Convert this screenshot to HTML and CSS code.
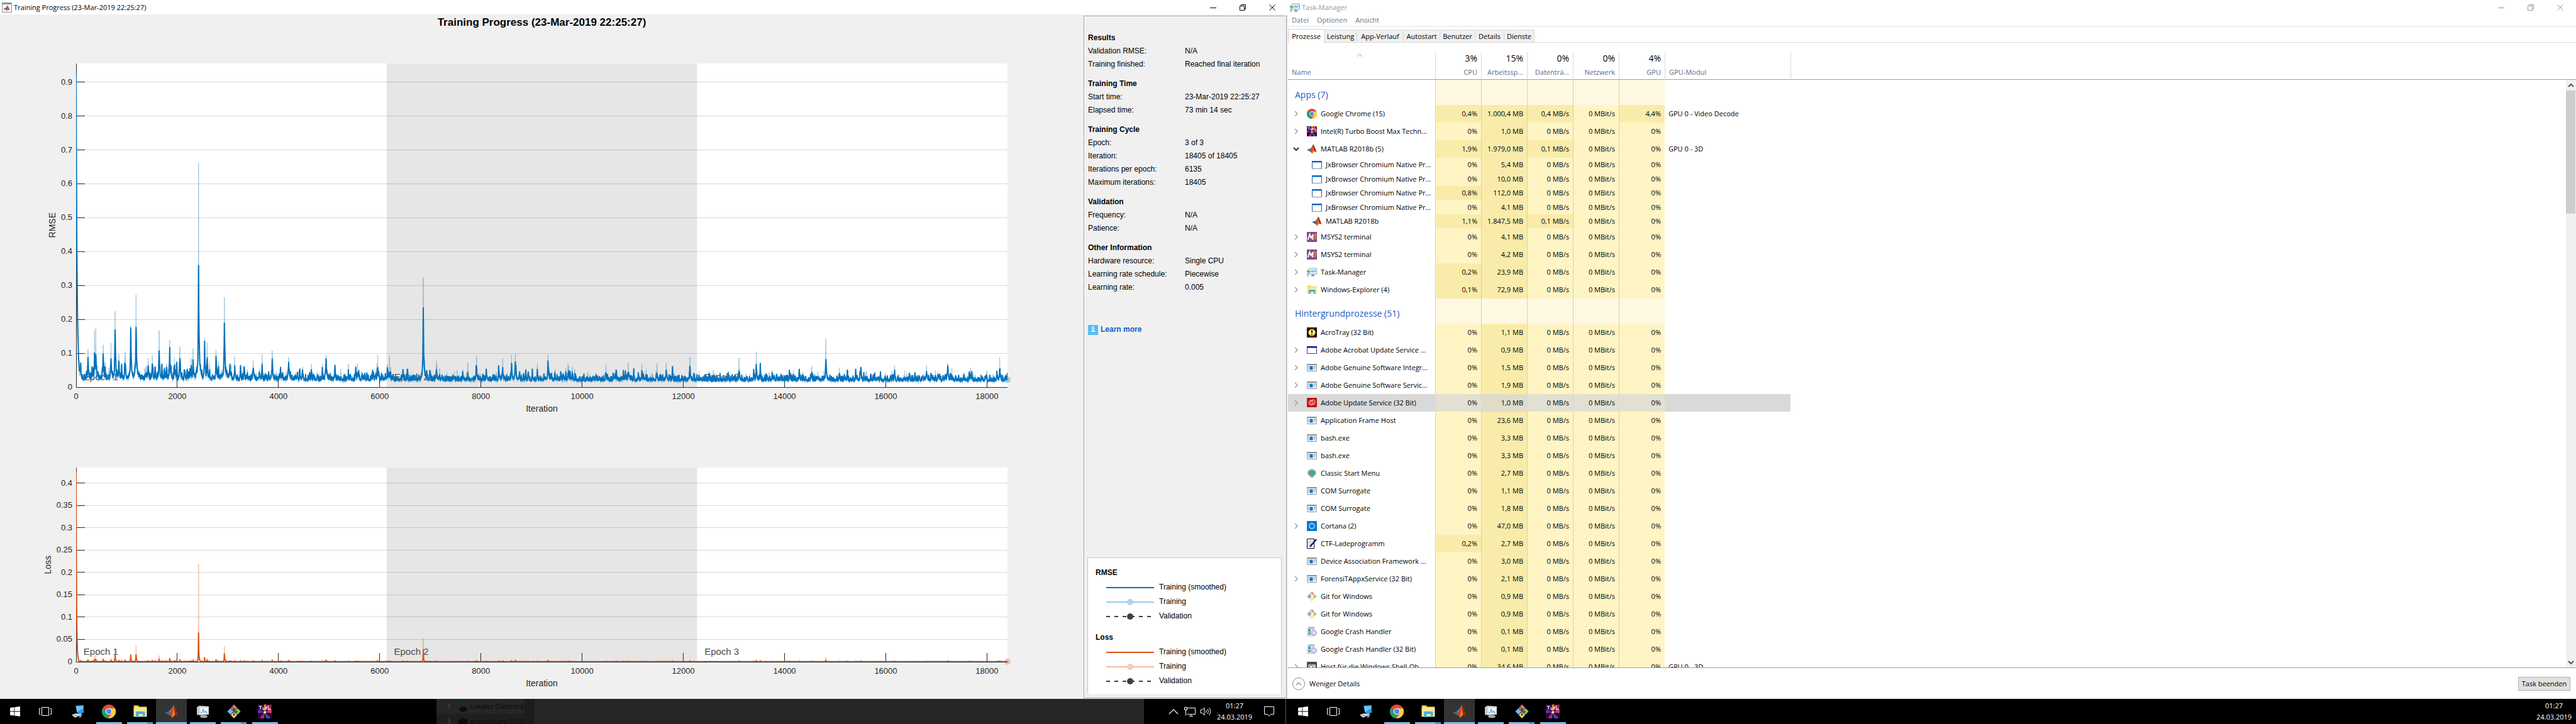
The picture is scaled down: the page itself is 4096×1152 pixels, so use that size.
FILE: index.html
```html
<!DOCTYPE html>
<html lang="de">
<head>
<meta charset="utf-8">
<title>Training Progress</title>
<link rel="stylesheet" href="styles.css">
</head>
<body>
<svg class="sprite" aria-hidden="true">
  <symbol id="i-matlab" viewBox="0 0 16 16"><path d="M0 9.5 5 7.2 7.6 9.4 4.6 12z" fill="#2d6f9e"/><path d="M5 7.2C7.5 6.8 8.6 2.6 10.4.6L7.6 9.4z" fill="#4ba0c8"/><path d="M10.4.6C8.4 3 7.6 8.4 4.6 12c2 0 2.600 2.600 3.800 3.200C10.400 13 10.800 11 12.600 12z" fill="#c8441b"/><path d="M10.400.6C9.800 4 10 9 8.400 15.200 10.600 14 11 11.400 12.600 11.600z" fill="#f28c28"/><path d="M10.400.6C12 2.600 13.600 8.800 16 13.600c-1.600-1.800-2.800-2-4.200-1C10.800 8 10.200 4 10.400.6z" fill="#a52a12"/></symbol>
  <symbol id="i-chrome" viewBox="0 0 16 16"><circle cx="8" cy="8" r="8" fill="#dd4b3e"/><path d="M1.100 4 6 9.500 8 12 7.400 16A8 8 0 0 1 1.100 4z" fill="#1da362"/><path d="M15.300 4.600H8.500L11.600 10 7.600 16A8 8 0 0 0 15.300 4.600z" fill="#ffcd42"/><circle cx="8" cy="8" r="3.800" fill="#f4f4f4"/><circle cx="8" cy="8" r="3" fill="#4a8af4"/></symbol>
  <symbol id="i-turbo" viewBox="0 0 16 16"><path d="M0 0h16v16H0z" fill="#2a0a3a"/><path d="M8 9 0 6v4z" fill="#6a2fb0"/><path d="M8 9 16 5v5z" fill="#e0305a"/><path d="M8 9 2 16h5z" fill="#c21e8a"/><path d="M8 9 10 16h5z" fill="#2f56c8"/><path d="M8 9 7 0h3z" fill="#f0852c"/><path d="M8 9 11 0h5v2z" fill="#a31545"/><circle cx="8" cy="9" r="1.500" fill="#ffe9b0"/><path d="M1 2h4M3 2v4M6 3v3h2V3M9.500 6V3H11M12 1v5h2V3.500" stroke="#fff" fill="none" stroke-width=".9"/></symbol>
  <symbol id="i-jx" viewBox="0 0 16 16"><path d="M.5 2.500h15v12H.5z" fill="#fff" stroke="#36599c"/><path d="M0 2h16v2.500H0z" fill="#0b63c4"/><path d="M0 14h16v1H0z" fill="#7f92b5"/></symbol>
  <symbol id="i-msys" viewBox="0 0 16 16"><path d="M0 0h16v16H0z" fill="#84498a"/><path d="M1.500 12.500 4.500 4 6.500 9.500 10 4 9 12.500" stroke="#fff" fill="none" stroke-width="2"/><path d="M10.500 5C12 3 15 4 14.500 6.500 14 8 12 8 12 8c3 .5 2.500 3.500-1.500 4" stroke="#f1803a" fill="none" stroke-width="1.800"/></symbol>
  <symbol id="i-task" viewBox="0 0 16 16"><path d="M.3 5h3v10h-3z" fill="#b8bdc2"/><path d="M.3 5h3v3h-3z" fill="#55b04a"/><path d="M3 1.500h13v10H3z" fill="#a5abb0"/><path d="M4 2.500h11v8H4z" fill="#d9f1fb"/><path d="M4 7.500h2L8 5l2 3 2.500-3L15 7.500" stroke="#1986bd" fill="none"/><path d="M8 11.500h3l1.500 3h-6z" fill="#8c9196"/></symbol>
  <symbol id="i-explorer" viewBox="0 0 16 16"><path d="M.5 1h5l1.500 1.500h8.500V14H.5z" fill="#ffd75e"/><path d="M.5 4h15v10H.5z" fill="#ffe795"/><path d="M3 8h10.500v6.500H11V11H5.800v3.500H3z" fill="#3fb2e5"/></symbol>
  <symbol id="i-acro" viewBox="0 0 16 16"><path d="M0 0h16v16H0z"/><path d="M1.500 1.500h13v13h-13z" fill="none" stroke="#d8201c" stroke-dasharray="2 1.500"/><circle cx="8" cy="8" r="5.500" fill="#fbf36a"/><path d="M8 4v5M8 10.500v2" stroke="#000" stroke-width="1.600"/></symbol>
  <symbol id="i-window" viewBox="0 0 16 16"><path d="M.5 2.500h15v11H.5z" fill="#fff" stroke="#3b3ba5"/><path d="M0 2h16v2.500H0z" fill="#0a0aa8"/></symbol>
  <symbol id="i-service" viewBox="0 0 16 16"><path d="M.8 2.500h14.400v11H.8z" fill="#f7f7f7" stroke="#8a9096"/><path d="M.5 2h15v2H.5z" fill="#8a9096"/><path d="M4.500 5.500h5v6h-5z" fill="#0a78d6"/><path d="M11 6h3M11 8h3M11 10h2M2 6h1.500M2 8h1.500M2 10h1.500" stroke="#8a9096"/></symbol>
  <symbol id="i-cc" viewBox="0 0 16 16"><rect width="16" height="15" rx="1" fill="#c9100f"/><circle cx="6.500" cy="8" r="3.300" fill="none" stroke="#fbb" stroke-width="1.200"/><circle cx="9.500" cy="7" r="3.600" fill="none" stroke="#fbb" stroke-width="1.200"/></symbol>
  <symbol id="i-shell" viewBox="0 0 16 16"><path d="M8 1c5 0 8 4 7 8-1 2-3 3-4 4v2H5v-2c-1-1-3-2-4-4C0 5 3 1 8 1z" fill="#e7b873"/><path d="M8 3c4 0 6 3 5.500 5.500C13 10.500 10 12 10 13H6c0-1-3-2.500-3.500-4.500C2 6 4 3 8 3z" fill="#32a9b8"/></symbol>
  <symbol id="i-cortana" viewBox="0 0 16 16"><path d="M0 0h16v16H0z" fill="#0a78d6"/><circle cx="8" cy="8" r="4" fill="none" stroke="#bfe3ff" stroke-width="1.400"/></symbol>
  <symbol id="i-ctf" viewBox="0 0 16 16"><path d="M.5.5h11v15H.5z" fill="#fff" stroke="#000"/><path d="M2 4h7M2 6.500h6M2 9h5M2 11.500h3" stroke="#555" stroke-dasharray="1 1"/><path d="M15 1 5 13" stroke="#14148c" stroke-width="2.600"/></symbol>
  <symbol id="i-git" viewBox="0 0 16 16"><path d="M8 0l3.600 3.800L8 7.600 4.400 3.800z" fill="#f07a72"/><path d="M4 4.200 7.600 8 4 11.800.3 8z" fill="#7eabf5"/><path d="M12 4.200 15.700 8 12 11.800 8.400 8z" fill="#86d157"/><path d="M8 8.400l3.600 3.800L8 16l-3.600-3.800z" fill="#ffe070"/><path d="M6 2.500 8 5v7M8 6l3 2.500" stroke="#444" stroke-width="1" fill="none"/><circle cx="8" cy="12" r="1.200" fill="#444"/><circle cx="11" cy="8.500" r="1.200" fill="#444"/><circle cx="8" cy="5.300" r="1.200" fill="#444"/></symbol>
  <symbol id="i-gitlight" viewBox="0 0 16 16"><path d="M8 0l3.600 3.800L8 7.600 4.400 3.800z" fill="#f58a84"/><path d="M4 4.200 7.600 8 4 11.800.3 8z" fill="#7eabf5"/><path d="M12 4.200 15.700 8 12 11.800 8.400 8z" fill="#98d870"/><path d="M8 8.400l3.600 3.800L8 16l-3.600-3.800z" fill="#ffe488"/><path d="M6 2.500 8 5v7M8 6l3 2.500" stroke="#fff" stroke-width="1.200" fill="none"/></symbol>
  <symbol id="i-setup" viewBox="0 0 16 16"><path d="M2 .5h10v3H2z" fill="#9db8d2"/><path d="M1 3h10v12H1z" fill="#d9e8f4" stroke="#9fb2c4" stroke-width=".6"/><path d="M2.500 4h3v4h-3z" fill="#2d7fd1"/><path d="M2.500 9h3v4h-3z" fill="#49a942"/><circle cx="11" cy="10" r="4.600" fill="#c9c9ec" stroke="#8e8ec2" stroke-width=".6"/><circle cx="11" cy="10" r="1.300" fill="#fff"/></symbol>
  <symbol id="i-host" viewBox="0 0 16 16"><path d="M0 0h16v16H0z" fill="#4a4a4a"/><path d="M2.500 4.500h11v9h-11z" fill="#fff"/><path d="M4 6h5v6H4zM10.500 6H12M10.500 8H12" fill="none" stroke="#4a4a4a"/></symbol>
  <symbol id="i-pc" viewBox="0 0 22 22"><path d="M7 2l13-1v12l-9 2z" fill="#2f9be8"/><path d="M8 3l11-1v4L9 12z" fill="#6cc4fa"/><path d="M9 15l7-1 2 3-8 2z" fill="#b9c2cb"/><path d="M1 16l8-2 5 3-8 4z" fill="#e3e7ea"/><path d="M3 17l6-1M5 19l6-2" stroke="#8a939b"/><path d="M14 18l3 1-4 2z" fill="#d7dce0"/></symbol>
  <symbol id="i-taskgray" viewBox="0 0 22 22"><path d="M2 4l4-2v15l-4-1z" fill="#c3c7c9"/><path d="M6 2l15 1v13L6 17z" fill="#d8dcde"/><path d="M8 5l11 .5v9L8 15z" fill="#eef6fb"/><path d="M8 13l3-1 1-5 2 6 2-3 1 3h2" stroke="#4a90c0" fill="none"/><ellipse cx="13" cy="19" rx="6" ry="2.500" fill="#a4a9ac"/></symbol>
  <symbol id="i-win" viewBox="0 0 16 16"><path d="M0 2.300 6.500 1.300v6.300H0zM7.300 1.200 16 0v7.600H7.300zM0 8.400h6.500v6.300L0 13.700zM7.300 8.400H16V16l-8.700-1.200z" fill="#fff"/></symbol>
  <symbol id="i-view" viewBox="0 0 20 16"><path d="M4.500 1.500h11v13h-11zM2.500 3.500h-2v9h2M17.500 3.500h2v9h-2" fill="none" stroke="#fff"/></symbol>
  <symbol id="i-min" viewBox="0 0 10 10"><path d="M0 5.500h10" stroke="currentColor"/></symbol>
  <symbol id="i-restore" viewBox="0 0 10 10"><path d="M.5 2.500h7v7h-7zM2.500 2.500v-2h7v7h-2" fill="none" stroke="currentColor"/></symbol>
  <symbol id="i-close" viewBox="0 0 10 10"><path d="M.5.5l9 9M9.500.5l-9 9" stroke="currentColor"/></symbol>
  <symbol id="i-right" viewBox="0 0 8 10"><path d="M2 1l4 4-4 4" fill="none" stroke="currentColor" stroke-width="1.500"/></symbol>
  <symbol id="i-down" viewBox="0 0 10 8"><path d="M1 2l4 4 4-4" fill="none" stroke="currentColor" stroke-width="2"/></symbol>
  <symbol id="i-up" viewBox="0 0 10 8"><path d="M1 6l4-4 4 4" fill="none" stroke="currentColor" stroke-width="2"/></symbol>
  <symbol id="i-upthin" viewBox="0 0 16 9"><path d="M1 8l7-7 7 7" fill="none" stroke="currentColor" stroke-width="1.200"/></symbol>
</svg>

<div class="screen">
  <main class="window">
    <header class="titlebar">
      <svg class="fig-icon" viewBox="0 0 16 16"><path d="M.5.5h15v15H.5z" fill="#f4f6f8" stroke="#8795a5"/><path d="M1 1h14v2H1z" fill="#6f9cc9"/><use href="#i-matlab" x="2" y="4" width="11" height="10"/></svg>
      <span>Training Progress (23-Mar-2019 22:25:27)</span>
      <div class="controls">
        <button aria-label="Minimieren"><svg><use href="#i-min"/></svg></button>
        <button aria-label="Verkleinern"><svg><use href="#i-restore"/></svg></button>
        <button aria-label="Schließen"><svg><use href="#i-close"/></svg></button>
      </div>
    </header>
    <div class="figure">
      <section class="plots">
        <h1>Training Progress (23-Mar-2019 22:25:27)</h1>
        <div class="y-axis rmse-axis" id="y1"><span class="y-name">RMSE</span></div>
        <svg class="plot" id="plot1"></svg>
        <div class="x-axis" id="x1"><span class="x-name">Iteration</span></div>
        <div class="y-axis loss-axis" id="y2"><span class="y-name">Loss</span></div>
        <svg class="plot" id="plot2"></svg>
        <div class="x-axis" id="x2"><span class="x-name">Iteration</span></div>
      </section>
      <aside class="panel">
        <div class="info">
          <h2>Results</h2>
          <dl><dt>Validation RMSE:</dt><dd>N/A</dd><dt>Training finished:</dt><dd>Reached final iteration</dd></dl>
          <h2>Training Time</h2>
          <dl><dt>Start time:</dt><dd>23-Mar-2019 22:25:27</dd><dt>Elapsed time:</dt><dd>73 min 14 sec</dd></dl>
          <h2>Training Cycle</h2>
          <dl><dt>Epoch:</dt><dd>3 of 3</dd><dt>Iteration:</dt><dd>18405 of 18405</dd><dt>Iterations per epoch:</dt><dd>6135</dd><dt>Maximum iterations:</dt><dd>18405</dd></dl>
          <h2>Validation</h2>
          <dl><dt>Frequency:</dt><dd>N/A</dd><dt>Patience:</dt><dd>N/A</dd></dl>
          <h2>Other Information</h2>
          <dl><dt>Hardware resource:</dt><dd>Single CPU</dd><dt>Learning rate schedule:</dt><dd>Piecewise</dd><dt>Learning rate:</dt><dd>0.005</dd></dl>
          <a class="learn" href="#"><span class="info-icon">i</span>Learn more</a>
        </div>
        <div class="legend">
          <h3>RMSE</h3>
          <p><svg><path d="M0 8h76" stroke="#0072bd" stroke-width="2"/></svg>Training (smoothed)</p>
          <p><svg><path d="M0 8h76" stroke="#99c7e5" stroke-width="2"/><circle cx="38" cy="8" r="5" fill="#b2d5eb"/></svg>Training</p>
          <p><svg><path d="M0 8h72" stroke="#404040" stroke-width="2" stroke-dasharray="6 7"/><circle cx="38" cy="8" r="5" fill="#404040"/></svg>Validation</p>
          <h3>Loss</h3>
          <p><svg><path d="M0 8h76" stroke="#d95319" stroke-width="2"/></svg>Training (smoothed)</p>
          <p><svg><path d="M0 8h76" stroke="#f0baa3" stroke-width="2"/><circle cx="38" cy="8" r="5" fill="#f4cbba"/></svg>Training</p>
          <p><svg><path d="M0 8h72" stroke="#404040" stroke-width="2" stroke-dasharray="6 7"/><circle cx="38" cy="8" r="5" fill="#404040"/></svg>Validation</p>
        </div>
      </aside>
    </div>
  </main>
  <nav class="taskbar">
    <div class="launch"></div>
    <div class="ghost">
      <div class="ghost-list">
        <div><svg class="g-chev"><use href="#i-right"/></svg><svg class="g-icon" viewBox="0 0 20 20"><path d="M1 1h5v5H1zM7 1h5v5H7zM1 7h5v5H1z" fill="#0a3142"/><path d="M5 13l8-3 6 3v4l-8 3-6-3z" fill="#0c0c0c"/></svg><span>Lokaler Datenträ</span></div>
        <div><svg class="g-chev"><use href="#i-right"/></svg><svg class="g-icon" viewBox="0 0 20 20"><path d="M3 7l8-3 8 3v6l-8 4-8-4z" fill="#0c0c0c"/></svg><span>groupshare (\\15</span></div>
      </div>
      <div class="ghost-bar"></div>
      <div class="ghost-rest"></div>
    </div>
    <div class="tray">
      <svg class="t-up"><use href="#i-upthin"/></svg>
      <svg class="t-net" viewBox="0 0 18 16"><path d="M4.500 2.500h13v10h-13M8 15.500h6M11 12.500v3M.5 1.500h4v4h-4zM2.500 5.500v9" fill="none" stroke="#fff"/></svg>
      <svg class="t-vol" viewBox="0 0 18 16"><path d="M1 5.500h2.500L7 2v12l-3.500-3.500H1zM9.500 6q1.500 2 0 4M12 4q3 4 0 8M14.500 2q4.500 6 0 12" fill="none" stroke="#fff"/></svg>
      <time><span>01:27</span><span>24.03.2019</span></time>
      <svg class="t-note" viewBox="0 0 16 16"><path d="M.5.5h15v12h-5l-2.500 3-2.500-3h-5z" fill="none" stroke="#fff"/></svg>
      <i class="peek"></i>
    </div>
  </nav>
</div>

<div class="screen">
  <main class="window tm">
    <header class="titlebar">
      <svg class="fig-icon"><use href="#i-task"/></svg>
      <span>Task-Manager</span>
      <div class="controls">
        <button aria-label="Minimieren"><svg><use href="#i-min"/></svg></button>
        <button aria-label="Verkleinern"><svg><use href="#i-restore"/></svg></button>
        <button aria-label="Schließen"><svg><use href="#i-close"/></svg></button>
      </div>
    </header>
    <nav class="menu"><button>Datei</button><button>Optionen</button><button>Ansicht</button></nav>
    <div class="tabs"><button class="on">Prozesse</button><button>Leistung</button><button>App-Verlauf</button><button>Autostart</button><button>Benutzer</button><button>Details</button><button>Dienste</button></div>
    <div class="list">
      <table>
        <colgroup><col class="c-name"><col class="c-num"><col class="c-num"><col class="c-num"><col class="c-num"><col class="c-num"><col class="c-mod"></colgroup>
        <thead><tr>
          <th class="left"><svg class="sort"><use href="#i-upthin"/></svg>Name</th>
          <th><b>3%</b>CPU</th><th><b>15%</b>Arbeitssp...</th><th><b>0%</b>Datenträ...</th><th><b>0%</b>Netzwerk</th><th><b>4%</b>GPU</th>
          <th class="left"><b></b>GPU-Modul</th><th class="end"></th>
        </tr></thead>
        <tbody id="rows"></tbody>
      </table>
      <div class="scroll"><button aria-label="Nach oben"><svg><use href="#i-up"/></svg></button><i class="thumb"></i><button class="last" aria-label="Nach unten"><svg><use href="#i-down"/></svg></button></div>
    </div>
    <footer class="foot">
      <button class="less"><svg viewBox="0 0 20 20"><circle cx="10" cy="10" r="9.500" fill="none" stroke="#8c8c8c"/><path d="M6 12l4-4 4 4" fill="none" stroke="#8c8c8c" stroke-width="1.300"/></svg>Weniger Details</button>
      <button class="end-task">Task beenden</button>
    </footer>
  </main>
  <nav class="taskbar">
    <div class="launch"></div>
    <div class="tray"><time><span>01:27</span><span>24.03.2019</span></time></div>
  </nav>
</div>
<script src="app.js"></script>
</body>
</html>
```

FILE: styles.css
```css
* { box-sizing: border-box; }
body { margin: 0; display: grid; grid-template-columns: 1fr 1fr; height: 100vh; overflow: hidden; font: 12px/16px "Liberation Sans", Arial, sans-serif; color: #000; }
h1, h2, h3, p, dl, dd { margin: 0; }
button { font: inherit; color: inherit; background: none; border: 0; padding: 0; }
.sprite { display: none; }
.screen { display: flex; flex-direction: column; min-width: 0; height: 100vh; }
.window { flex: 1; min-height: 0; display: flex; flex-direction: column; background: #fff; }

.titlebar { display: flex; align-items: center; height: 23px; padding: 0 2px 0 3px; gap: 3px; background: #fff; font: 11px/16px "Open Sans", "Noto Sans", sans-serif; }
.fig-icon { width: 16px; height: 16px; }
.controls { display: flex; margin-left: auto; }
.controls button { width: 47px; height: 23px; display: grid; place-items: center; }
.controls svg { width: 10px; height: 10px; }

.figure { flex: 1; min-height: 0; display: grid; grid-template-columns: 1fr 323px; padding-right: 2px; background: #f0f0f0; }
.plots { display: grid; grid-template-columns: 121fr 1481fr 121fr; grid-template-rows: 78px minmax(0, 515fr) 128px minmax(0, 309fr) 59px; color: #262626; }
.plots h1 { grid-column: 1 / -1; font-size: 17px; line-height: 26px; text-align: center; color: #000; }
.y-axis { grid-column: 1; position: relative; display: flex; align-items: center; font-size: 13px; }
.rmse-axis { padding-left: 75px; }
.loss-axis { padding-left: 68px; }
.y-name { writing-mode: vertical-rl; transform: rotate(180deg); font-size: 14px; }
.y-tick { position: absolute; right: 6px; transform: translateY(50%); }
.plot { grid-column: 2; width: 100%; height: 100%; overflow: visible; display: block; background: #fff; }
.x-axis { grid-column: 2; position: relative; padding-top: 26px; text-align: center; font-size: 13px; }
.x-name { font-size: 14px; }
.x-tick { position: absolute; top: 7px; transform: translateX(-50%); }
.shade { fill: #e6e6e6; }
.grid { stroke: #000; stroke-opacity: .15; shape-rendering: crispEdges; }
.tick { stroke: #262626; shape-rendering: crispEdges; }
.epoch { font-size: 15px; fill: #4d4d4d; }
.series { fill: none; stroke-width: 1; vector-effect: non-scaling-stroke; stroke-linejoin: round; }
.raw { opacity: .4; }
.smooth { stroke-width: 2; }
.blue { stroke: #0072bd; }
.red { stroke: #d95319; }
.dot { opacity: .3; }
.dot-blue { fill: #0072bd; }
.dot-red { fill: #d95319; }

.panel { display: flex; flex-direction: column; justify-content: space-between; margin: 2px 0 1px; border: 1px solid #a0a0a0; box-shadow: inset 1px 1px #fff; padding: 24px 7px 6px 5px; }
.info { padding-left: 1px; line-height: 21px; }
.info h2 { font-size: 12px; line-height: 21px; }
.info dl { display: grid; grid-template-columns: 154px 1fr; margin-bottom: 10px; }
.learn { display: flex; align-items: center; gap: 4px; margin-top: 46px; font-weight: bold; color: #0563c8; text-decoration: none; }
.info-icon { width: 16px; height: 16px; background: #58bdf5; color: #fff; font: bold 13px/16px "Liberation Mono", monospace; text-align: center; }
.legend { border: 1px solid #c8c8c8; border-bottom: 0; background: #fff; padding: 12px 12px 9px; line-height: 23px; }
.legend h3 { font-size: 12px; line-height: 23px; }
.legend h3:not(:first-child) { margin-top: 11px; }
.legend p { display: flex; align-items: center; gap: 8px; padding-left: 17px; }
.legend svg { width: 76px; height: 16px; }

.taskbar { display: flex; height: 40px; background: #000; color: #fff; font: 11px/18px "Open Sans", "Noto Sans", sans-serif; }
.launch { display: flex; flex: 0 0 694px; }
.launch button { width: 48px; display: grid; place-items: center; }
.win-logo { width: 16px; height: 16px; }
.view { width: 20px; height: 16px; }
.apps { display: flex; width: 347px; margin-left: 3px; }
.apps button { flex: 1; position: relative; }
.apps svg { width: 22px; height: 22px; }
.apps .open { background: linear-gradient(#76b9ed, #76b9ed) center bottom / 41px 3px no-repeat; }
.apps .multi { background: linear-gradient(90deg, #76b9ed 32px, #5c92bd 32px) center bottom / 41px 3px no-repeat; }
.apps .active { background: linear-gradient(#76b9ed, #76b9ed) center bottom / 100% 3px no-repeat, linear-gradient(90deg, #333 44px, #262626 44px 45px, #333 45px); }
.ghost { flex: 1; display: flex; background: #262626; color: #080808; overflow: hidden; }
.ghost-list { flex: 0 0 140px; overflow: hidden; }
.ghost-list div { display: flex; align-items: center; height: 24px; padding: 0 0 0 16px; white-space: nowrap; }
.ghost-list div + div { background: #1f1f1f; }
.g-chev { flex: none; width: 8px; height: 10px; margin-right: 8px; color: #444; }
.g-icon { flex: none; width: 18px; height: 18px; margin-right: 3px; }
.ghost-bar { flex: 0 0 16px; background: #1c1c1c; }
.tray { display: flex; align-items: center; margin-left: auto; }
.ghost + .tray { flex: 0 0 229px; padding-left: 39px; }
.t-up { width: 16px; height: 9px; margin-right: 9px; }
.t-net { width: 18px; height: 16px; margin-right: 7px; }
.t-vol { width: 18px; height: 16px; margin-right: 9px; }
.tray time { display: flex; flex-direction: column; align-items: center; width: 56px; }
.t-note { width: 18px; height: 16px; margin-left: 18px; }
.peek { align-self: stretch; width: 1px; margin-left: auto; margin-right: 3px; background: #555; }
.taskbar > .launch + .tray { padding-right: 7px; }

.tm { font: 11px/16px "Open Sans", "Noto Sans", sans-serif; }
.tm .titlebar { color: #999; }
.menu { display: flex; gap: 13px; height: 20px; padding: 0 6px; border-bottom: 2px solid #f0f0f0; color: #757575; }
.tabs { display: grid; grid-template-columns: 58px 52px 74px 58px 56px 46px 48px; align-items: end; height: 25px; border-bottom: 1px solid #d9d9d9; }
.tabs button { height: 20px; border: 1px solid #d9d9d9; border-width: 1px 1px 0 0; background: #f0f0f0; white-space: nowrap; }
.tabs .on { height: 22px; margin-bottom: -1px; background: #fff; border-left-width: 1px; }
.list { flex: 1; min-height: 0; position: relative; overflow: hidden; padding-top: 15px; border-bottom: 1px solid #a0a0a0; }
table { width: 100%; table-layout: fixed; border-collapse: separate; border-spacing: 0; }
.c-name { width: 234px; }
.c-num { width: 73px; }
.c-mod { width: 200px; }
th { position: relative; height: 44px; padding: 0 6px 3px; border-bottom: 1px solid #a0a0a0; border-left: 1px solid #d9d9d9; font-weight: normal; color: #566d8c; text-align: right; vertical-align: bottom; line-height: 16px; }
th:first-child { border-left: 0; }
th b { display: block; height: 24px; font-size: 14px; line-height: 20px; font-weight: normal; color: #000; }
.left { text-align: left; }
.sort { position: absolute; left: 109px; top: 2px; width: 10px; height: 6px; color: #777; }
td { height: 28px; padding: 0 6px; text-align: right; white-space: nowrap; }
.child td { height: 22px; }
.child:nth-child(even) td { height: 23px; }
.group td { height: 40px; }
.group .name { padding: 8px 0 0 11px; font-size: 14px; line-height: 20px; color: #2659c6; text-align: left; }
.heat { border-left: 1px solid #e6d097; background: #fff4c4; }
.hot { background: #f9ecaa; }
.group .heat { background: #fff8e2; }
.name div { display: flex; align-items: center; }
td.name, td.left { text-align: left; }
.chev { width: 10px; height: 10px; margin: 0 12px 0 2px; color: #a0a0a0; }
.chev.down { color: #333; }
.icon { width: 16px; height: 16px; margin-right: 6px; }
.child .icon { margin-left: 8px; }
.selected td { background: #d9d9d9; }
.selected .heat { background: #e2e0d2; border-left-color: #d9d9d9; }
.selected .hot { background: #e0dcc9; }
.selected .rest { background: none; }
.scroll { position: absolute; top: 59px; right: 0; bottom: 0; width: 16px; background: #f0f0f0; color: #555; display: flex; flex-direction: column; }
.scroll button { height: 17px; display: grid; place-items: center; }
.scroll svg { width: 10px; height: 8px; }
.thumb { width: 15px; height: 21%; background: #cdcdcd; }
.scroll .last { margin-top: auto; }
.foot { display: flex; align-items: center; justify-content: space-between; height: 49px; padding: 0 9px 0 7px; }
.less { display: flex; align-items: center; gap: 7px; }
.less svg { width: 20px; height: 20px; }
.end-task { width: 83px; height: 22px; background: #e1e1e1; border: 1px solid #adadad; }
```

FILE: app.js
```js
const TOTAL = 18405;
const EPOCH = 6135;

/* Repeatable pseudo random numbers */
let seed = 20190323;
function rnd() {
  seed = (seed * 1664525 + 1013904223) % 4294967296;
  return seed / 4294967296;
}

/* [iteration, raw RMSE, smoothed RMSE] */
const peaks = [
  [237, .112, .097], [363, .168, .12], [391, .175, .115], [537, .125, .112], [691, .13, .1],
  [768, .224, .182], [844, .097, .075], [970, .105, .08], [1082, .18, .175], [1186, .272, .199],
  [1424, .085, .07], [1507, .093, .075], [1640, .168, .12], [1849, .139, .115], [1947, .09, .07],
  [2052, .119, .1], [2310, .114, .08], [2421, .661, .375], [2540, .146, .136], [2589, .132, .09],
  [2763, .11, .085], [2931, .265, .24], [3133, .09, .06], [3500, .08, .06], [3873, .108, .09],
  [4201, .088, .075], [4941, .095, .09], [5560, .07, .05], [5959, .095, .07], [6190, .092, .05],
  [6859, .322, .228], [7118, .077, .055], [7913, .09, .06], [8430, .085, .05], [8604, .095, .075],
  [8681, .1, .09], [9324, .095, .08], [9722, .07, .05], [10468, .067, .05], [10908, .071, .05],
  [11180, .07, .045], [11480, .07, .045], [11662, .072, .06], [12129, .088, .065], [13099, .087, .05],
  [13441, .104, .07], [14816, .142, .105], [15493, .06, .05], [16805, .065, .055], [17223, .07, .07],
  [17677, .055, .045], [18249, .088, .06]
];

const STEP = 5;
const count = Math.floor(TOTAL / STEP) + 1;
const bump = new Float64Array(count);
const extra = new Float64Array(count);

function addPeak(it, height, tau) {
  const c = Math.round(it / STEP);
  for (let k = -20; k <= 20; k++) {
    if (c + k < 0 || c + k >= count) continue;
    const d = Math.abs(k * STEP);
    bump[c + k] = Math.max(bump[c + k], height * Math.exp(-d / (k < 0 ? tau * .7 : tau)));
  }
}
for (let it = 60; it < TOTAL; it += 8 + rnd() * 34) {
  const scale = it < 3200 ? .018 : it < 6500 ? .012 : .009;
  addPeak(it, Math.min(-Math.log(1 - rnd()) * scale, .045), 9);
}
for (const [it, raw, smooth] of peaks) {
  addPeak(it, smooth - .02, 13);
  /* a wider foot under the tallest peaks */
  addPeak(it, (smooth - .02) * .3, 34);
  extra[Math.round(it / STEP)] = raw;
}

const smooth = [], raw = [];
for (let k = 0; k < count; k++) {
  const it = k * STEP;
  const base = .019 + .005 * Math.exp(-it / 6000);
  const start = .9 * Math.exp(-it / 18);
  const s = base * (.85 + rnd() * rnd() * .95) + bump[k] * (.75 + rnd() * .25) + start;
  smooth.push(s);
  const swing = s * (.66 + rnd() * rnd() * 1.05);
  raw.push(extra[k] || (it < 60 ? s * 1.1 : swing));
}

function path(values, max, f) {
  return 'M' + values.map((v, k) => (k * STEP) + ' ' + (1000 - f(v) / max * 1000).toFixed(1)).join('L');
}

function draw(n, max, step, digits, color, f) {
  const pct = v => (v * 100).toFixed(3) + '%';
  let out = `<rect class="shade" x="${pct(EPOCH / TOTAL)}" y="0" width="${pct(EPOCH / TOTAL)}" height="100%"/>`;
  let ticks = '', yLabels = '', xLabels = '';
  for (let i = 0; i * step < max; i++) {
    const y = pct(1 - i * step / max);
    if (i) out += `<line class="grid" x1="0" x2="100%" y1="${y}" y2="${y}"/>`;
    ticks += `<line class="tick" x1="0" x2="14" y1="${y}" y2="${y}"/>`;
    yLabels += `<span class="y-tick" style="bottom:${pct(i * step / max)}">${+(i * step).toFixed(digits)}</span>`;
  }
  for (let it = 0; it < TOTAL; it += 2000) {
    const x = pct(it / TOTAL);
    ticks += `<svg y="100%" overflow="visible"><line class="tick" x1="${x}" x2="${x}" y1="-14" y2="0"/></svg>`;
    xLabels += `<span class="x-tick" style="left:${x}">${it}</span>`;
  }
  ticks += '<line class="tick" x1="0" x2="0" y1="0" y2="100%"/><line class="tick" x1="0" x2="100%" y1="100%" y2="100%"/>';
  let labels = '';
  for (let e = 0; e < 3; e++) labels += `<svg y="100%" overflow="visible"><text class="epoch" x="${pct(e / 3 + .008)}" y="-11">Epoch ${e + 1}</text></svg>`;
  const last = pct(1 - f(.022) / max);
  out += ticks + labels +
    `<svg width="100%" height="100%" viewBox="0 0 ${TOTAL} 1000" preserveAspectRatio="none">` +
    `<path class="series raw ${color}" d="${path(raw, max, f)}"/>` +
    `<path class="series smooth ${color}" d="${path(smooth, max, f)}"/></svg>` +
    `<circle class="dot dot-${color}" cx="100%" cy="${last}" r="5"/>`;
  document.getElementById('plot' + n).innerHTML = out;
  document.getElementById('y' + n).insertAdjacentHTML('beforeend', yLabels);
  document.getElementById('x' + n).insertAdjacentHTML('beforeend', xLabels);
}
draw(1, .955, .1, 1, 'blue', v => v);
draw(2, .4348, .05, 2, 'red', v => v * v / 2);

/* Process list: name, icon, arrow, cpu, memory, disk, gpu, module, kind */
const rows = [
  ['Apps (7)'],
  ['Google Chrome (15)', 'chrome', 'r', '0,4', '1.000,4', '0,4', '4,4', 'GPU 0 - Video Decode'],
  ['Intel(R) Turbo Boost Max Techn...', 'turbo', 'r', '0', '1,0'],
  ['MATLAB R2018b (5)', 'matlab', 'd', '1,9', '1.979,0', '0,1', '0', 'GPU 0 - 3D'],
  ['JxBrowser Chromium Native Pr...', 'jx', '', '0', '5,4', '0', '0', '', 'child'],
  ['JxBrowser Chromium Native Pr...', 'jx', '', '0', '10,0', '0', '0', '', 'child'],
  ['JxBrowser Chromium Native Pr...', 'jx', '', '0,8', '112,0', '0', '0', '', 'child'],
  ['JxBrowser Chromium Native Pr...', 'jx', '', '0', '4,1', '0', '0', '', 'child'],
  ['MATLAB R2018b', 'matlab', '', '1,1', '1.847,5', '0,1', '0', '', 'child'],
  ['MSYS2 terminal', 'msys', 'r', '0', '4,1'],
  ['MSYS2 terminal', 'msys', 'r', '0', '4,2'],
  ['Task-Manager', 'task', 'r', '0,2', '23,9'],
  ['Windows-Explorer (4)', 'explorer', 'r', '0,1', '72,9'],
  ['Hintergrundprozesse (51)'],
  ['AcroTray (32 Bit)', 'acro', '', '0', '1,1'],
  ['Adobe Acrobat Update Service ...', 'window', 'r', '0', '0,9'],
  ['Adobe Genuine Software Integr...', 'service', 'r', '0', '1,5'],
  ['Adobe Genuine Software Servic...', 'service', 'r', '0', '1,9'],
  ['Adobe Update Service (32 Bit)', 'cc', 'r', '0', '1,0', '0', '0', '', 'selected'],
  ['Application Frame Host', 'service', '', '0', '23,6'],
  ['bash.exe', 'service', '', '0', '3,3'],
  ['bash.exe', 'service', '', '0', '3,3'],
  ['Classic Start Menu', 'shell', '', '0', '2,7'],
  ['COM Surrogate', 'service', '', '0', '1,1'],
  ['COM Surrogate', 'service', '', '0', '1,8'],
  ['Cortana (2)', 'cortana', 'r', '0', '47,0'],
  ['CTF-Ladeprogramm', 'ctf', '', '0,2', '2,7'],
  ['Device Association Framework ...', 'service', '', '0', '3,0'],
  ['ForensiTAppxService (32 Bit)', 'service', 'r', '0', '2,1'],
  ['Git for Windows', 'gitlight', '', '0', '0,9'],
  ['Git for Windows', 'gitlight', '', '0', '0,9'],
  ['Google Crash Handler', 'setup', '', '0', '0,1'],
  ['Google Crash Handler (32 Bit)', 'setup', '', '0', '0,1'],
  ['Host für die Windows Shell-Ob...', 'host', 'r', '0', '34,6', '0', '0', 'GPU 0 - 3D']
];
const heat = (v, unit, hot) => `<td class="heat${hot || v !== '0' ? ' hot' : ''}">${v}${unit}</td>`;
document.getElementById('rows').innerHTML = rows.map(r => {
  const [name, icon, arrow, cpu, mem, disk = '0', gpu = '0', mod = '', kind = ''] = r;
  if (!icon) return `<tr class="group"><td class="name">${name}</td>${'<td class="heat"></td>'.repeat(5)}<td></td><td></td></tr>`;
  const chev = arrow === 'd' ? '<svg class="chev down"><use href="#i-down"/></svg>'
    : `<svg class="chev">${arrow ? '<use href="#i-right"/>' : ''}</svg>`;
  return `<tr class="${kind}"><td class="name"><div>${chev}<svg class="icon"><use href="#i-${icon}"/></svg>${name}</div></td>` +
    heat(cpu, '%') + heat(mem, ' MB', true) + heat(disk, ' MB/s') + heat('0', ' MBit/s') + heat(gpu, '%') +
    `<td class="left">${mod}</td><td class="rest"></td></tr>`;
}).join('');

/* Both taskbars carry the same buttons */
const apps = [
  ['pc', '', 'Dieser PC'], ['chrome', 'open', 'Google Chrome'], ['explorer', 'multi', 'Explorer'],
  ['matlab', 'active', 'MATLAB'], ['taskgray', 'open', 'Task-Manager'], ['git', 'multi', 'Git'], ['turbo', 'open', 'Turbo Boost']
];
document.querySelectorAll('.launch').forEach(el => {
  el.innerHTML = '<button aria-label="Start"><svg class="win-logo"><use href="#i-win"/></svg></button>' +
    '<button aria-label="Taskansicht"><svg class="view"><use href="#i-view"/></svg></button><div class="apps">' +
    apps.map(([i, c, t]) => `<button class="${c}" aria-label="${t}"><svg><use href="#i-${i}"/></svg></button>`).join('') + '</div>';
});
```
